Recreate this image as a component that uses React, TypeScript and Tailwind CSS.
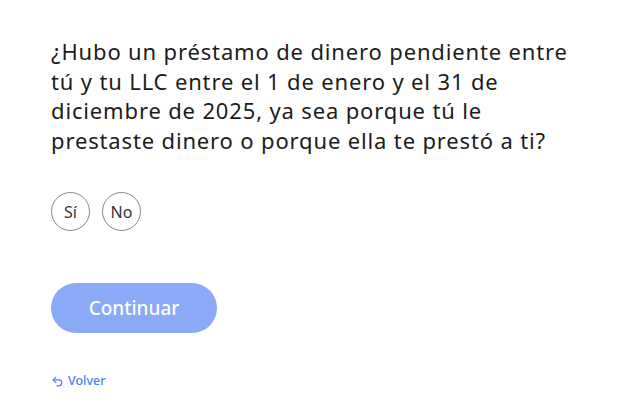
import { Undo2 } from 'lucide-react'

const QUESTION_LINES = [
  '¿Hubo un préstamo de dinero pendiente entre',
  'tú y tu LLC entre el 1 de enero y el 31 de',
  'diciembre de 2025, ya sea porque tú le',
  'prestaste dinero o porque ella te prestó a ti?',
] as const

const OPTIONS = ['Sí', 'No'] as const

export default function App() {
  return (
    <main className="min-h-screen bg-white px-[51px] pt-[37px] font-['Noto_Sans',sans-serif] text-[#1c1c1c]">
      <h1 className="text-[22px] font-normal leading-[29.5px] tracking-[0.85px]">
        {QUESTION_LINES.map((line) => (
          <span key={line} className="block whitespace-nowrap">
            {line}
          </span>
        ))}
      </h1>

      <div className="mt-[37px] flex gap-3">
        {OPTIONS.map((opt) => (
          <button
            key={opt}
            type="button"
            className="flex h-[39px] w-[39px] items-center justify-center rounded-full border border-[#8a8a8a] text-[16px] text-[#333]"
          >
            {opt}
          </button>
        ))}
      </div>

      <button
        type="button"
        className="mt-[52px] flex h-[50px] w-[166px] items-center justify-center rounded-full bg-[#8aaaf8] text-[19px] font-medium text-white"
      >
        Continuar
      </button>

      <a href="#" className="mt-[39px] flex items-center gap-1 text-[12.5px] font-medium text-[#4a7cf5]">
        <Undo2 size={13} strokeWidth={2.2} />
        Volver
      </a>
    </main>
  )
}
